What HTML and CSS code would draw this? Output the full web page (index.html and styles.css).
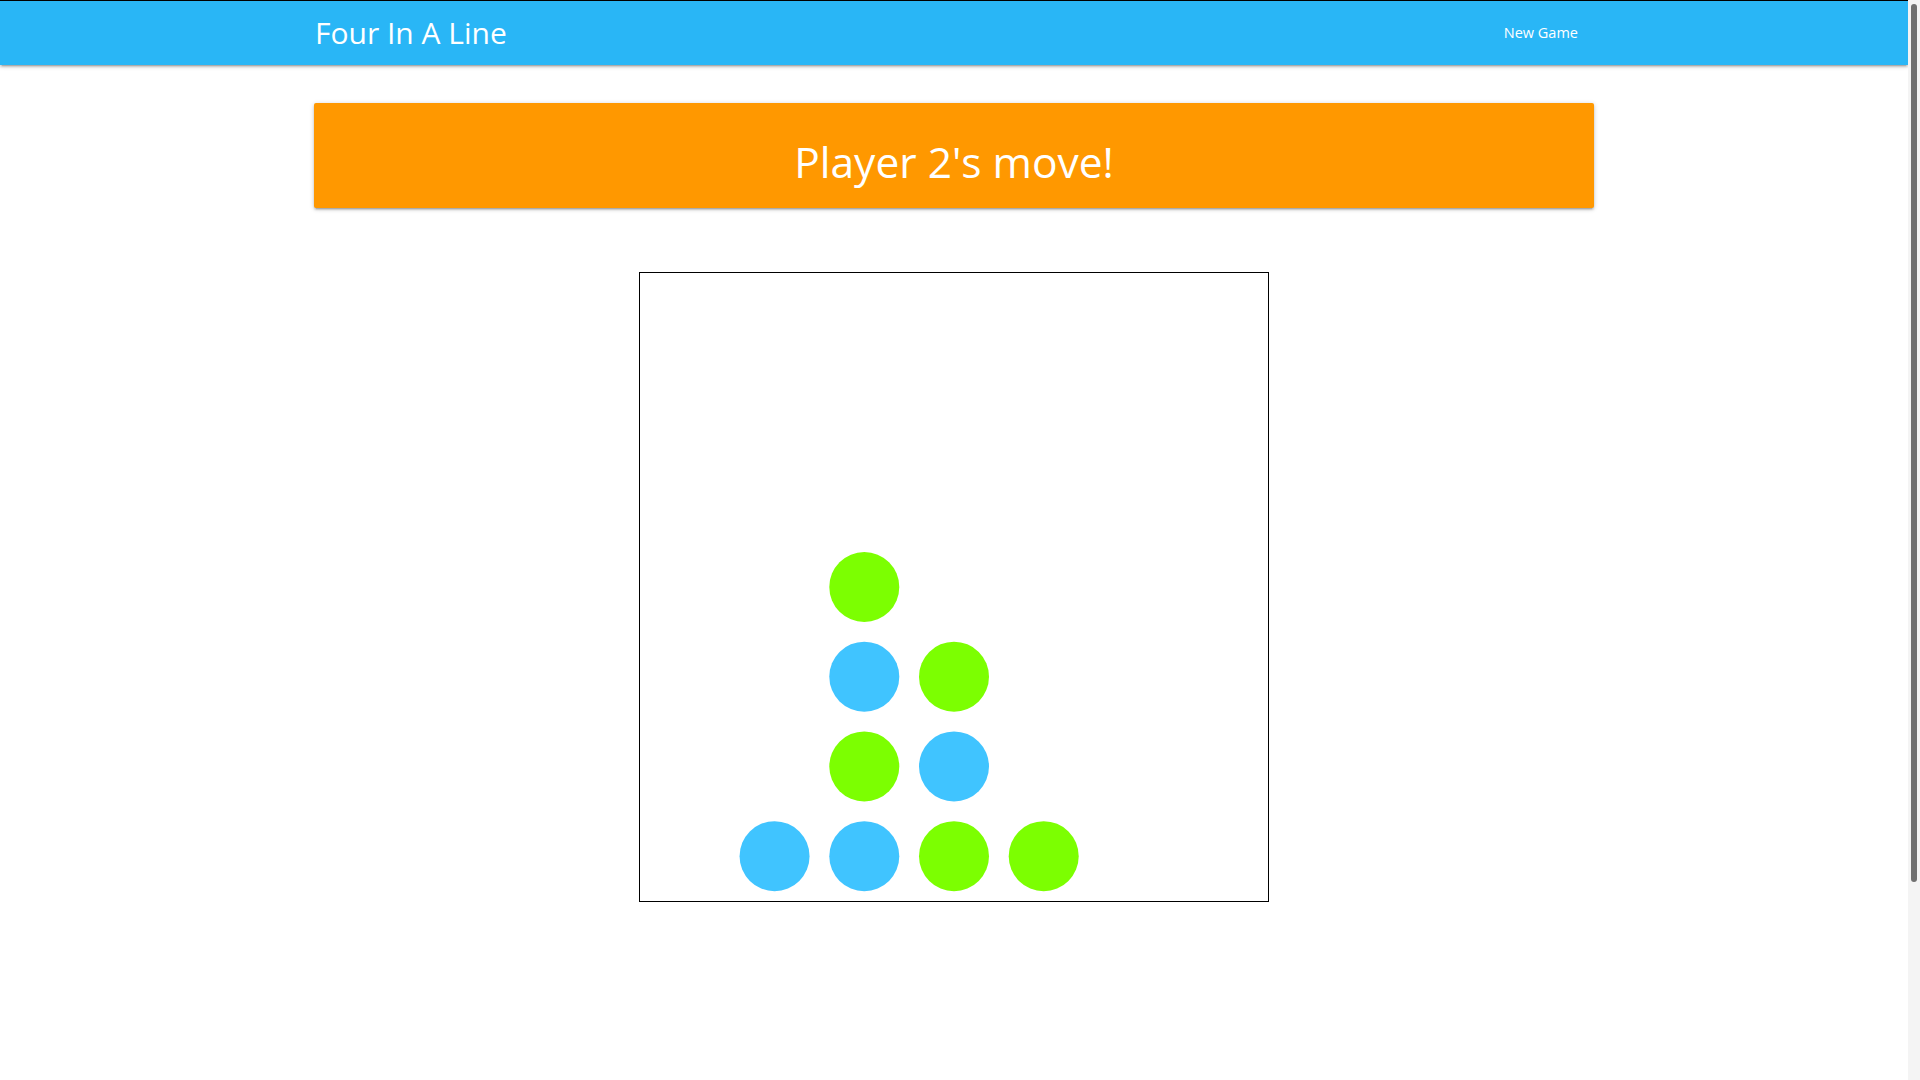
FILE: index.html
```html
<!DOCTYPE html>
<html lang="en">
<head>
<meta charset="utf-8">
<title>Four In A Line</title>
<link rel="stylesheet" href="styles.css">
</head>
<body>
<div class="page">
  <nav class="navbar">
    <div class="container nav-inner">
      <a class="brand" href="#">Four In A Line</a>
      <ul class="nav-links">
        <li><a href="#">New Game</a></li>
      </ul>
    </div>
  </nav>
  <main class="container main">
    <div class="status-panel">
      <h3 class="status-text">Player 2's move!</h3>
    </div>
    <div class="board-wrap">
      <svg class="board" width="628" height="628" viewBox="0 0 628 628" xmlns="http://www.w3.org/2000/svg">
        <circle cx="134.57" cy="583.14" r="35" class="p1"/>
        <circle cx="224.29" cy="583.14" r="35" class="p1"/>
        <circle cx="314" cy="583.14" r="35" class="p2"/>
        <circle cx="403.71" cy="583.14" r="35" class="p2"/>
        <circle cx="224.29" cy="493.43" r="35" class="p2"/>
        <circle cx="314" cy="493.43" r="35" class="p1"/>
        <circle cx="224.29" cy="403.71" r="35" class="p1"/>
        <circle cx="314" cy="403.71" r="35" class="p2"/>
        <circle cx="224.29" cy="314" r="35" class="p2"/>
      </svg>
    </div>
  </main>
</div>
<div class="scrollbar" aria-hidden="true"><div class="scrollbar-thumb"></div></div>
</body>
</html>
```
FILE: styles.css
```css
html, body {
  margin: 0;
  padding: 0;
}
body {
  border-top: 1px solid #000;
  background: #fff;
  font-family: "Open Sans", "Noto Sans", sans-serif;
  color: #fff;
  padding-right: 12px;
}
.page {
  width: 1908px;
}
.scrollbar {
  position: fixed;
  top: 0;
  right: 0;
  width: 12px;
  height: 100vh;
  background: #f4f4f4;
  padding: 4px 3px 0;
  box-sizing: border-box;
}
.scrollbar-thumb {
  width: 6px;
  height: 878px;
  background: #707070;
  border-radius: 3px;
}
.container {
  width: 1280px;
  margin: 0 auto;
}
.navbar {
  height: 64px;
  background: #29b6f6;
  box-shadow: 0 2px 2px 0 rgba(0,0,0,0.14), 0 3px 1px -2px rgba(0,0,0,0.12), 0 1px 5px 0 rgba(0,0,0,0.2);
}
.nav-inner {
  display: flex;
  justify-content: space-between;
  align-items: stretch;
  height: 64px;
}
.brand {
  color: #fff;
  text-decoration: none;
  font-size: 30px;
  line-height: 64px;
  padding-left: 1px;
}
.nav-links {
  list-style: none;
  margin: 0;
  padding: 0;
  display: flex;
}
.nav-links a {
  display: block;
  color: #fff;
  text-decoration: none;
  font-size: 14.5px;
  line-height: 64px;
  padding: 0 16px 0 15px;
}
.main {
  padding-top: 38px;
  padding-bottom: 426px;
}
.status-panel {
  background: #ff9800;
  border-radius: 2px;
  height: 105px;
  box-sizing: border-box;
  padding: 30px 24px 18px;
  box-shadow: 0 2px 2px 0 rgba(0,0,0,0.14), 0 3px 1px -2px rgba(0,0,0,0.12), 0 1px 5px 0 rgba(0,0,0,0.2);
}
.status-text {
  margin: 0;
  text-align: center;
  font-weight: 400;
  font-size: 42.5px;
  line-height: 57px;
  color: #fff;
}
.board-wrap {
  display: flex;
  justify-content: center;
  padding-top: 64px;
}
.board {
  display: block;
  border: 1px solid #000;
  background: #fff;
}
.p1 { fill: #40c4ff; }
.p2 { fill: #7cff01; }
```
